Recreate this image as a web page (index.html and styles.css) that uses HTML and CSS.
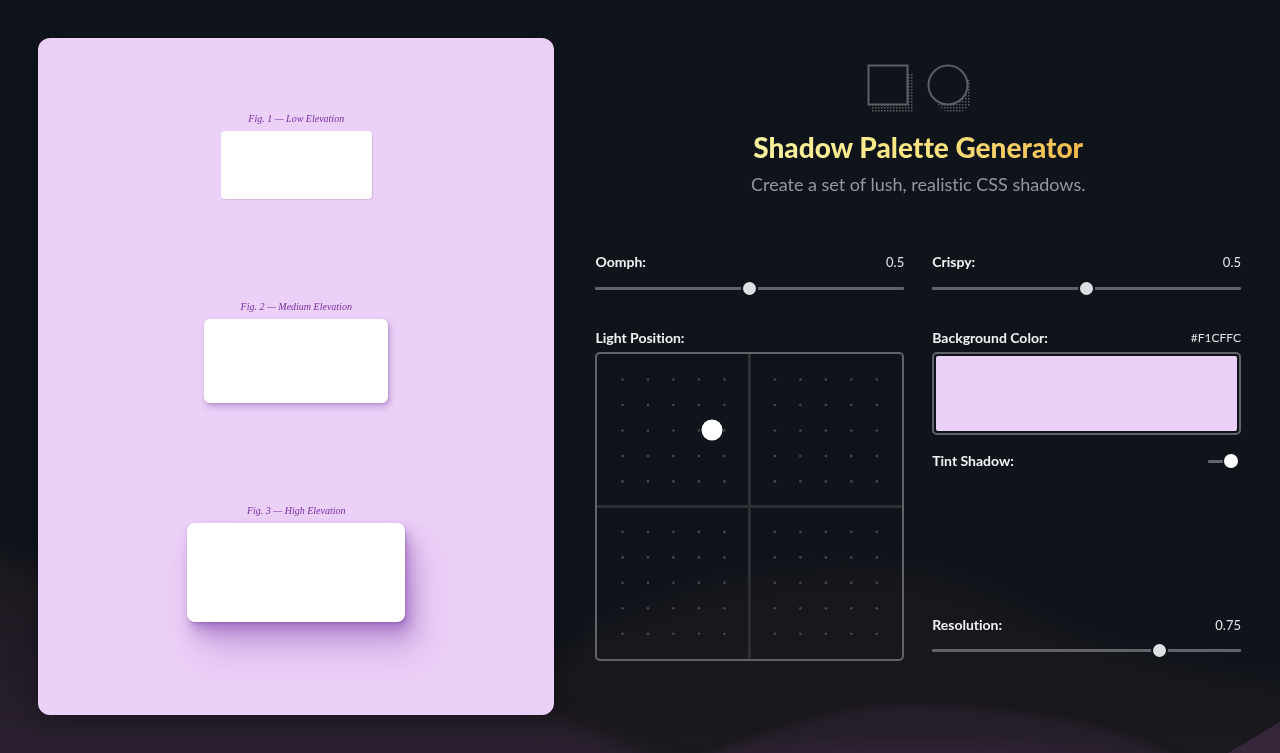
FILE: index.html
```html
<!DOCTYPE html>
<html lang="en">
<head>
<meta charset="utf-8">
<meta name="viewport" content="width=device-width, initial-scale=1">
<title>Shadow Palette Generator</title>
<link rel="stylesheet" href="styles.css">
</head>
<body>
<svg class="waves" viewBox="0 0 1280 753" preserveAspectRatio="none" aria-hidden="true">
  <defs>
    <linearGradient id="wave-left" x1="0" y1="0" x2="0" y2="1">
      <stop offset="0" stop-color="#1c191f"/>
      <stop offset=".4" stop-color="#231c27"/>
      <stop offset="1" stop-color="#33243a"/>
    </linearGradient>
    <linearGradient id="wave-mid" x1="0" y1="0" x2="0" y2="1">
      <stop offset="0" stop-color="#17171b"/>
      <stop offset="1" stop-color="#1b191d"/>
    </linearGradient>
    <radialGradient id="wave-front" cx=".45" cy="1" r=".6">
      <stop offset="0" stop-color="#38273f"/>
      <stop offset="1" stop-color="#251d29"/>
    </radialGradient>
    <filter id="soft" x="-10%" y="-20%" width="120%" height="140%" color-interpolation-filters="sRGB"><feGaussianBlur stdDeviation="10"/></filter>
    <filter id="softer" x="-10%" y="-20%" width="120%" height="140%" color-interpolation-filters="sRGB"><feGaussianBlur stdDeviation="3"/></filter>
  </defs>
  <path d="M500 690C640 590 760 568 870 568C980 572 1020 620 1100 645C1180 670 1240 680 1340 690V820H480Z" fill="url(#wave-mid)" filter="url(#soft)"/>
  <path d="M-60 560C0 545 60 570 120 590C320 620 500 690 700 780V840H-60Z" fill="url(#wave-left)" filter="url(#soft)"/>
  <path d="M690 760C760 735 800 722 850 710C900 700 960 706 1010 712C1080 720 1140 735 1200 770Z" fill="url(#wave-front)" filter="url(#softer)"/>
  <path d="M1228 753L1280 722V753Z" fill="#35263c"/>
</svg>

<main class="page">
  <section class="preview" aria-label="Shadow preview">
    <figure class="sample sample-low">
      <figcaption>Fig. 1 — Low Elevation</figcaption>
      <div class="card"></div>
    </figure>
    <figure class="sample sample-medium">
      <figcaption>Fig. 2 — Medium Elevation</figcaption>
      <div class="card"></div>
    </figure>
    <figure class="sample sample-high">
      <figcaption>Fig. 3 — High Elevation</figcaption>
      <div class="card"></div>
    </figure>
  </section>

  <section class="generator">
    <header class="intro">
      <svg class="logo" width="106" height="50" viewBox="0 0 106 50" aria-hidden="true">
        <defs>
          <pattern id="dither" width="3" height="3" patternUnits="userSpaceOnUse">
            <rect x="1" y="1" width="1.500" height="1.500" fill="#5b5e62"/>
          </pattern>
        </defs>
        <rect x="7" y="9" width="41" height="40" fill="url(#dither)"/>
        <circle cx="89" cy="29" r="20" fill="url(#dither)"/>
        <rect class="shape" x="3.500" y="1.500" width="39" height="39"/>
        <circle class="shape" cx="83" cy="21" r="19.500"/>
      </svg>
      <h1>Shadow Palette Generator</h1>
      <p>Create a set of lush, realistic CSS shadows.</p>
    </header>

    <form class="controls">
      <div class="control">
        <div class="row"><label for="oomph">Oomph:</label><output for="oomph">0.5</output></div>
        <input id="oomph" class="slider" type="range" min="0" max="1" step="0.01" value="0.5">
      </div>
      <div class="control">
        <div class="row"><label for="crispy">Crispy:</label><output for="crispy">0.5</output></div>
        <input id="crispy" class="slider" type="range" min="0" max="1" step="0.01" value="0.5">
      </div>

      <div class="control">
        <div class="row"><label for="light">Light Position:</label></div>
        <div class="pad">
          <svg viewBox="0 0 305 305" aria-hidden="true">
            <defs>
              <g id="dot-row" fill="#474a4f">
                <circle cx="25.500" cy="0" r="1.300"/><circle cx="51" cy="0" r="1.300"/><circle cx="76.500" cy="0" r="1.300"/><circle cx="102" cy="0" r="1.300"/><circle cx="127.500" cy="0" r="1.300"/>
              </g>
              <g id="dots">
                <use href="#dot-row" y="25.500"/><use href="#dot-row" y="51"/><use href="#dot-row" y="76.500"/><use href="#dot-row" y="102"/><use href="#dot-row" y="127.500"/>
              </g>
            </defs>
            <path d="M152.500 0V305M0 152.500H305" stroke="#2c2f33" stroke-width="3"/>
            <use href="#dots"/><use href="#dots" x="152.500"/><use href="#dots" y="152.500"/><use href="#dots" x="152.500" y="152.500"/>
          </svg>
          <button id="light" class="handle" type="button"></button>
        </div>
      </div>

      <div class="control">
        <div class="row"><label for="background">Background Color:</label><output class="hex" for="background">#F1CFFC</output></div>
        <input id="background" class="swatch" type="color" value="#ebd0f7">
        <div class="row tint"><label for="tint">Tint Shadow:</label><input id="tint" class="toggle" type="checkbox" checked></div>
        <div class="control resolution">
          <div class="row"><label for="resolution">Resolution:</label><output for="resolution">0.75</output></div>
          <input id="resolution" class="slider" type="range" min="0" max="1" step="0.01" value="0.75">
        </div>
      </div>
    </form>
  </section>
</main>
</body>
</html>
```
FILE: styles.css
```css
:root {
  --bg: #0f141b;
  --line: #606368;
  --surface: #ebd0f7;
}

* { box-sizing: border-box; }

body {
  margin: 0;
  min-height: 100vh;
  background: var(--bg);
  color: #f0f1f3;
  font-family: Lato, "Open Sans", sans-serif;
  font-variant-ligatures: none;
}

.waves {
  position: fixed;
  inset: 0;
  width: 100%;
  height: 100%;
  z-index: -1;
}

.page {
  display: grid;
  grid-template-columns: 4fr 5fr;
  gap: 41px;
  min-height: 100vh;
  padding: 38px 39px 38px 38px;
}

.preview {
  display: flex;
  flex-direction: column;
  align-items: center;
  justify-content: center;
  gap: 100px;
  padding-bottom: 20px;
  border-radius: 12px;
  background: var(--surface);
  box-shadow: 0 4px 24px rgb(10 14 18 / 50%);
}

.sample { margin: 0; }
.sample-low { width: 151px; }
.sample-medium { width: 184px; }
.sample-high { width: 218px; }

figcaption {
  height: 20px;
  color: #7a2da5;
  font: italic 10px/16px "Liberation Serif", serif;
  text-align: center;
  white-space: nowrap;
}

.card {
  aspect-ratio: 11 / 5;
  border-radius: 6px;
  background: #fff;
}

.sample-low .card {
  border-radius: 4px;
  box-shadow: 1px 1px 1px rgb(145 80 185 / 20%);
}

.sample-medium .card {
  box-shadow:
    1px 1px 2px rgb(125 75 165 / 25%),
    2px 4px 6px rgb(125 75 165 / 35%);
}

.sample-high .card {
  border-radius: 8px;
  box-shadow:
    1px 2px 2px rgb(125 65 165 / 30%),
    3px 6px 8px rgb(125 65 165 / 30%),
    7px 14px 18px rgb(130 70 175 / 30%),
    14px 28px 36px rgb(130 70 175 / 26%);
}

.generator { padding-top: 26px; }

.intro {
  display: flex;
  flex-direction: column;
  align-items: center;
  text-align: center;
}

.logo { display: block; }

.shape {
  fill: var(--bg);
  stroke: #5c5f64;
  stroke-width: 2px;
}

h1 {
  margin: 16px 0 0;
  background: linear-gradient(100deg, #fbf3a0, #fbe37f 55%, #f3b94a);
  background-clip: text;
  -webkit-background-clip: text;
  color: transparent;
  font-size: 28px;
  font-weight: 900;
  line-height: 34px;
}

.intro p {
  margin: 8px 0 0;
  color: #94979c;
  font-size: 18px;
  line-height: 24px;
}

.controls {
  display: grid;
  grid-template-columns: 1fr 1fr;
  gap: 30px 28px;
  padding-top: 56px;
}

.control {
  display: flex;
  flex-direction: column;
}

.row {
  display: flex;
  align-items: center;
  justify-content: space-between;
  height: 20px;
  font-size: 14px;
  line-height: 20px;
}

label { font-weight: 700; }
output { font-size: 13px; color: #e2e4e7; }
.hex { font-size: 12px; }

.slider {
  appearance: none;
  width: 100%;
  height: 20px;
  margin: 6px 0 0;
  background: transparent;
}

.slider::-webkit-slider-runnable-track {
  height: 3px;
  border-radius: 1px;
  background: var(--line);
}

.slider::-webkit-slider-thumb {
  appearance: none;
  width: 17px;
  height: 17px;
  margin-top: -7px;
  border: 2px solid var(--bg);
  border-radius: 50%;
  background: #dcdfe4;
}

.pad {
  position: relative;
  margin-top: 4px;
  border: 2px solid var(--line);
  border-radius: 5px;
}

.pad svg { display: block; width: 100%; }

.handle {
  position: absolute;
  left: 37.5%;
  top: 25%;
  width: 21px;
  height: 21px;
  padding: 0;
  border: 0;
  border-radius: 50%;
  background: #fff;
  transform: translate(-50%, -50%);
}

.swatch {
  appearance: none;
  width: 100%;
  height: 83px;
  margin: 4px 0 0;
  padding: 2px;
  border: 2px solid var(--line);
  border-radius: 5px;
  background: var(--bg);
}

.swatch::-webkit-color-swatch-wrapper { padding: 0; }

.swatch::-webkit-color-swatch {
  border: 0;
  border-radius: 2px;
}

.tint {
  margin-top: 16px;
  padding-right: 3px;
}

.toggle {
  appearance: none;
  display: flex;
  align-items: center;
  width: 30px;
  height: 16px;
  margin: 0;
}

.toggle::before {
  content: "";
  flex: 1;
  height: 3px;
  margin-right: 1px;
  border-radius: 1px;
  background: var(--line);
}

.toggle::after {
  content: "";
  width: 14px;
  height: 14px;
  border-radius: 50%;
  background: #fff;
}

.resolution { margin-top: auto; }
```
